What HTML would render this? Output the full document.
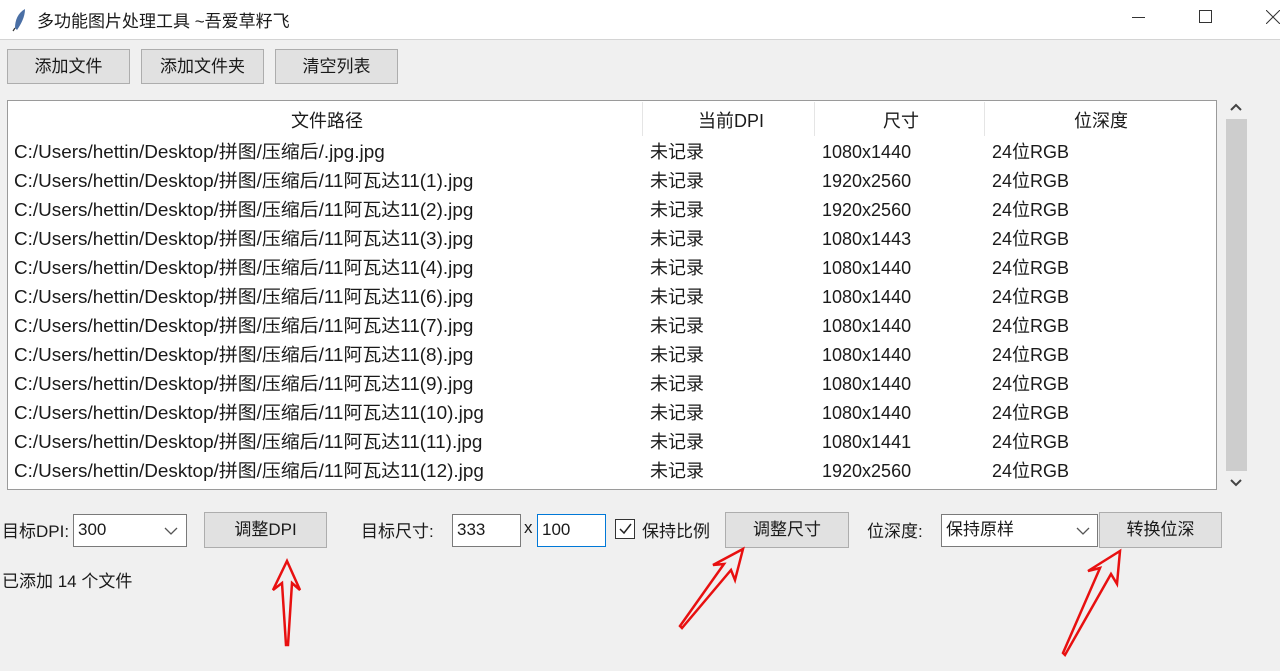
<!DOCTYPE html>
<html><head><meta charset="utf-8"><style>
*{margin:0;padding:0;box-sizing:border-box}
body{width:1280px;height:671px;background:#f0f0f0;font-family:"Liberation Sans","Noto Sans CJK SC",sans-serif;font-size:17px;color:#1a1a1a;position:relative;overflow:hidden}
.a{position:absolute;white-space:nowrap}
.title{position:absolute;left:0;top:0;width:1280px;height:40px;background:#fff;border-bottom:1px solid #d4d4d4}
.btn{position:absolute;background:#e1e1e1;border:1px solid #adadad;text-align:center;font-size:17px}
.list{position:absolute;left:7px;top:100px;width:1210px;height:390px;background:#fff;border:1px solid #9a9a9a;font-size:18px}
.sep{position:absolute;top:1px;width:1px;height:34px;background:#e5e5e5}
.inp{position:absolute;background:#fff;border:1px solid #7a7a7a;font-size:17px;padding-left:4px}
</style></head><body>
<div class="title">
<svg class="a" style="left:12px;top:8px" width="16" height="24"><path d="M13 1 C6 5 3 12 3 20 L5 22 C9 16 13 9 13 1Z" fill="#4a6fa5"/><path d="M3 20 L1 23" stroke="#333" stroke-width="1.2"/></svg>
<div class="a" style="left:37px;top:7px;font-size:17px">多功能图片处理工具 ~吾爱草籽飞</div>
<div class="a" style="left:1132px;top:17px;width:13px;height:1px;background:#333"></div>
<div class="a" style="left:1199px;top:10px;width:13px;height:13px;border:1px solid #333"></div>
<svg class="a" style="left:1266px;top:10px" width="14" height="14"><path d="M0 0L14 14M14 0L0 14" stroke="#333" stroke-width="1"/></svg>
</div>
<div class="btn" style="left:7px;top:49px;width:123px;height:35px;line-height:33px">添加文件</div>
<div class="btn" style="left:141px;top:49px;width:123px;height:35px;line-height:33px">添加文件夹</div>
<div class="btn" style="left:275px;top:49px;width:123px;height:35px;line-height:33px">清空列表</div>
<div class="list">
<div class="sep" style="left:634px"></div><div class="sep" style="left:806px"></div><div class="sep" style="left:976px"></div>
<div class="a" style="left:283px;top:6px">文件路径</div>
<div class="a" style="left:690px;top:6px">当前DPI</div>
<div class="a" style="left:875px;top:6px">尺寸</div>
<div class="a" style="left:1066px;top:6px">位深度</div>
<div class="a" style="left:6px;top:37px;line-height:29px;transform:scaleX(1.05);transform-origin:0 0">C:/Users/hettin/Desktop/拼图/压缩后/.jpg.jpg<br>C:/Users/hettin/Desktop/拼图/压缩后/11阿瓦达11(1).jpg<br>C:/Users/hettin/Desktop/拼图/压缩后/11阿瓦达11(2).jpg<br>C:/Users/hettin/Desktop/拼图/压缩后/11阿瓦达11(3).jpg<br>C:/Users/hettin/Desktop/拼图/压缩后/11阿瓦达11(4).jpg<br>C:/Users/hettin/Desktop/拼图/压缩后/11阿瓦达11(6).jpg<br>C:/Users/hettin/Desktop/拼图/压缩后/11阿瓦达11(7).jpg<br>C:/Users/hettin/Desktop/拼图/压缩后/11阿瓦达11(8).jpg<br>C:/Users/hettin/Desktop/拼图/压缩后/11阿瓦达11(9).jpg<br>C:/Users/hettin/Desktop/拼图/压缩后/11阿瓦达11(10).jpg<br>C:/Users/hettin/Desktop/拼图/压缩后/11阿瓦达11(11).jpg<br>C:/Users/hettin/Desktop/拼图/压缩后/11阿瓦达11(12).jpg</div>
<div class="a" style="left:642px;top:37px;line-height:29px">未记录<br>未记录<br>未记录<br>未记录<br>未记录<br>未记录<br>未记录<br>未记录<br>未记录<br>未记录<br>未记录<br>未记录</div>
<div class="a" style="left:814px;top:37px;line-height:29px">1080x1440<br>1920x2560<br>1920x2560<br>1080x1443<br>1080x1440<br>1080x1440<br>1080x1440<br>1080x1440<br>1080x1440<br>1080x1440<br>1080x1441<br>1920x2560</div>
<div class="a" style="left:984px;top:37px;line-height:29px">24位RGB<br>24位RGB<br>24位RGB<br>24位RGB<br>24位RGB<br>24位RGB<br>24位RGB<br>24位RGB<br>24位RGB<br>24位RGB<br>24位RGB<br>24位RGB</div>
</div>
<svg class="a" style="left:1229px;top:101px" width="14" height="12"><path d="M2 9L7 4L12 9" stroke="#444" stroke-width="2" fill="none"/></svg>
<div class="a" style="left:1226px;top:119px;width:21px;height:352px;background:#cdcdcd"></div>
<svg class="a" style="left:1229px;top:477px" width="14" height="12"><path d="M2 3L7 8L12 3" stroke="#444" stroke-width="2" fill="none"/></svg>
<div class="a" style="left:2px;top:517px">目标DPI:</div>
<div class="inp" style="left:73px;top:514px;width:114px;height:33px;line-height:30px">300</div>
<svg class="a" style="left:164px;top:526px" width="14" height="10"><path d="M1 2L7 8L13 2" stroke="#555" stroke-width="1.3" fill="none"/></svg>
<div class="btn" style="left:204px;top:512px;width:123px;height:36px;line-height:33px">调整DPI</div>
<div class="a" style="left:361px;top:517px">目标尺寸:</div>
<div class="inp" style="left:452px;top:514px;width:69px;height:33px;line-height:30px">333</div>
<div class="a" style="left:524px;top:518px">x</div>
<div class="inp" style="left:537px;top:514px;width:69px;height:33px;line-height:30px;border-color:#0078d7">100</div>
<div class="a" style="left:615px;top:519px;width:20px;height:20px;border:1px solid #333;background:#fff"></div>
<svg class="a" style="left:617px;top:521px" width="16" height="16"><path d="M3 8L7 12L14 3" stroke="#222" stroke-width="1.5" fill="none"/></svg>
<div class="a" style="left:642px;top:517px">保持比例</div>
<div class="btn" style="left:725px;top:512px;width:124px;height:36px;line-height:33px">调整尺寸</div>
<div class="a" style="left:867px;top:517px">位深度:</div>
<div class="inp" style="left:941px;top:514px;width:157px;height:33px;line-height:30px">保持原样</div>
<svg class="a" style="left:1076px;top:526px" width="14" height="10"><path d="M1 2L7 8L13 2" stroke="#555" stroke-width="1.3" fill="none"/></svg>
<div class="btn" style="left:1099px;top:512px;width:123px;height:36px;line-height:33px">转换位深</div>
<div class="a" style="left:2px;top:567px">已添加 14 个文件</div>
<svg class="a" style="left:0;top:0" width="1280" height="671">
<g fill="none" stroke="#e81010" stroke-width="2.5" stroke-linejoin="miter">
<path d="M287 561 L300 590 L292 583 L288 645 L286 645 L282 583 L273 590 Z"/>
<path d="M743 549 L735 580 L731 570 L682 628 L680 626 L724 564 L713 565 Z"/>
<path d="M1120 551 L1117 584 L1111 574 L1065 655 L1063 653 L1100 568 L1088 571 Z"/>
</g></svg>
</body></html>
